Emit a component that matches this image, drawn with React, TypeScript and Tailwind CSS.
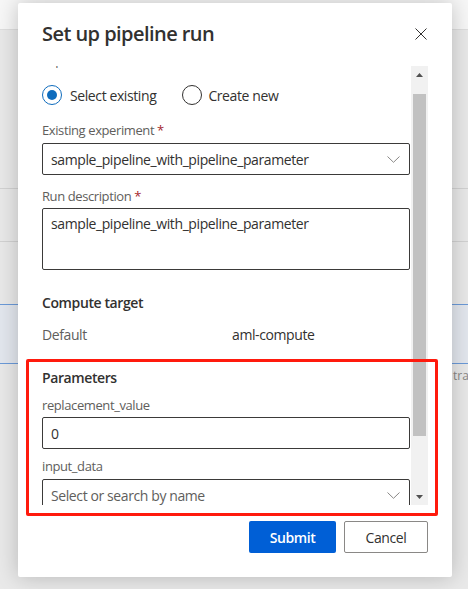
import React from "react";

function Chevron() {
  return (
    <svg width="13" height="7" viewBox="0 0 13 7" fill="none">
      <path d="M0.5 0.5 L6.5 6.3 L12.5 0.5" stroke="#8a8886" strokeWidth="1" />
    </svg>
  );
}

function Label({ text, required }: { text: string; required?: boolean }) {
  return (
    <div className="text-[13px] leading-[20px] text-[#605e5c]">
      {text}
      {required && <span className="text-[#a4262c]"> *</span>}
    </div>
  );
}

function Dropdown({ value, placeholder }: { value?: string; placeholder?: string }) {
  return (
    <div className="flex h-[32px] shrink-0 items-center justify-between rounded-[2px] border border-[#3b3a39] bg-white pl-[8px] pr-[9px]">
      <span className={value ? "text-[14px] text-[#323130]" : "text-[14px] text-[#605e5c]"}>
        {value ?? placeholder}
      </span>
      <Chevron />
    </div>
  );
}

export default function App() {
  return (
    <div className="relative h-[589px] w-[468px] overflow-hidden bg-[#e9e9e9] font-['Open_Sans','Noto_Sans',sans-serif]">
      {/* background page behind dialog */}
      <div className="h-[30px] border-b border-[#dedede] bg-[#f7f7f7]" />
      <div className="h-[158px]" />
      <div className="h-[53px] border-t border-[#d2d2d2]" />
      <div className="h-[63px] border-t border-[#d2d2d2]" />
      <div className="h-[60px] border-y border-[#6b9ad8] bg-[#e3e7ee]" />
      <div className="pl-[453px] pt-[4px] text-[12px] leading-[16px] text-[#8a8886]">tra...</div>

      {/* dialog */}
      <div className="absolute left-[18px] top-[3px] flex h-[574px] w-[434px] flex-col rounded-[2px] bg-white tracking-[-0.4px] shadow-[0_0_22px_rgba(0,0,0,0.22)]">
        <div className="flex h-[63px] shrink-0 items-start justify-between pl-[24px] pr-[25px] pt-[17px]">
          <h1 className="text-[20px] font-semibold leading-[28px] tracking-[-0.55px] text-[#323130]">Set up pipeline run</h1>
          <svg width="12" height="12" viewBox="0 0 12 12" className="mt-[8px]">
            <path d="M0.5 0.5 L11.5 11.5 M11.5 0.5 L0.5 11.5" stroke="#323130" strokeWidth="1" />
          </svg>
        </div>

        <div className="flex h-[439px] shrink-0 pl-[24px] pr-[24px]">
          <div className="w-[368px] overflow-hidden">
            <div className="-mt-[16px] flex flex-col">
              <div className="text-[13px] leading-[20px] text-[#605e5c]">Experiment</div>
              <div className="mt-[15px] flex h-[20px] items-center text-[14px] text-[#323130]">
                <div className="flex h-[20px] w-[20px] items-center justify-center rounded-full border border-[#0f6cbd]">
                  <div className="h-[10px] w-[10px] rounded-full bg-[#0f6cbd]" />
                </div>
                <span className="ml-[8px]">Select existing</span>
                <div className="ml-[26px] h-[20px] w-[20px] rounded-full border border-[#323130]" />
                <span className="ml-[6px]">Create new</span>
              </div>

              <div className="mt-[15px]">
                <Label text="Existing experiment" required />
              </div>
              <div className="mt-[3px]">
                <Dropdown value="sample_pipeline_with_pipeline_parameter" />
              </div>

              <div className="mt-[11px]">
                <Label text="Run description" required />
              </div>
              <div className="mt-[2px] h-[62px] rounded-[2px] border border-[#3b3a39] px-[8px] pt-[5px] text-[14px] leading-[20px] text-[#323130]">
                sample_pipeline_with_pipeline_parameter
              </div>

              <div className="mt-[23px] text-[14px] font-semibold leading-[20px] text-[#323130]">Compute target</div>
              <div className="mt-[12px] flex text-[14px] leading-[20px]">
                <span className="w-[190px] text-[#605e5c]">Default</span>
                <span className="text-[#323130]">aml-compute</span>
              </div>

              <div className="mt-[23px] text-[14px] font-semibold leading-[20px] text-[#323130]">Parameters</div>
              <div className="mt-[7px]">
                <Label text="replacement_value" />
              </div>
              <div className="mt-[2px] flex h-[32px] items-center rounded-[2px] border border-[#3b3a39] px-[8px] text-[14px] text-[#323130]">
                0
              </div>
              <div className="mt-[7px]">
                <Label text="input_data" />
              </div>
              <div className="mt-[3px]">
                <Dropdown placeholder="Select or search by name" />
              </div>
            </div>
          </div>

          {/* scrollbar */}
          <div className="relative ml-[1px] w-[17px] bg-[#f1f1f1]">
            <div className="flex h-[17px] items-center justify-center">
              <svg width="7" height="4" viewBox="0 0 7 4">
                <path d="M0 4 L3.5 0 L7 4 Z" fill="#505050" />
              </svg>
            </div>
            <div className="mx-[2px] mt-[11px] h-[342px] bg-[#c1c1c1]" />
            <div className="absolute bottom-0 left-0 flex h-[17px] w-[17px] items-center justify-center">
              <svg width="7" height="4" viewBox="0 0 7 4">
                <path d="M0 0 L3.5 4 L7 0 Z" fill="#505050" />
              </svg>
            </div>
          </div>
        </div>

        <div className="flex justify-end gap-[8px] pr-[24px] pt-[16px]">
          <button className="h-[32px] w-[87px] rounded-[2px] bg-[#005fd6] text-[14px] font-semibold text-white">Submit</button>
          <button className="h-[32px] w-[84px] rounded-[2px] border border-[#8a8886] bg-white text-[14px] font-normal text-[#323130]">Cancel</button>
        </div>
      </div>

      {/* red annotation box */}
      <div className="absolute left-[26px] top-[359px] h-[157px] w-[412px] rounded-[2px] border-[3px] border-[#ff1a0d]" />
    </div>
  );
}
